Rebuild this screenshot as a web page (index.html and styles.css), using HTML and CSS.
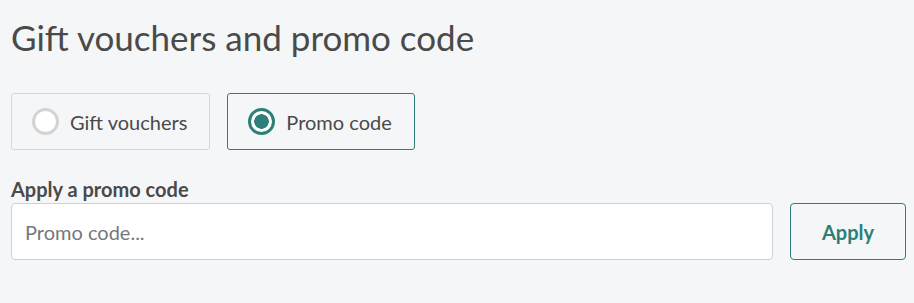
FILE: index.html
```html
<!DOCTYPE html>
<html>
  <head>
    <title>Gift vouchers and promo code</title>
    <link rel="stylesheet" href="styles.css">
  </head>
  <body>
    <h1>Gift vouchers and promo code</h1>
    <div class="options">
      <label class="option">
        <span class="radio"></span>
        Gift vouchers
      </label>
      <label class="option selected">
        <span class="radio"></span>
        Promo code
      </label>
    </div>
    <div class="field-label">Apply a promo code</div>
    <div class="promo-row">
      <input class="promo-input" type="text" placeholder="Promo code...">
      <button class="apply-button">Apply</button>
    </div>
  </body>
</html>
```

FILE: styles.css
```css
body {
  margin: 0;
  padding: 0 8px 0 11px;
  background-color: #f5f6f8;
  color: #4a4a4a;
  font-family: Lato, "Open Sans", sans-serif;
}

h1 {
  margin: 0;
  padding-top: 16px;
  font-size: 35px;
  font-weight: 400;
  line-height: 43px;
}

.options {
  display: flex;
  gap: 17px;
  margin-top: 34px;
}

.option {
  display: flex;
  align-items: center;
  gap: 11px;
  box-sizing: border-box;
  height: 57px;
  padding: 0 22px 0 20px;
  border: 1px solid #d5d6d8;
  border-radius: 3px;
  font-size: 20px;
  cursor: pointer;
}

.option.selected {
  border-color: #2c7f79;
}

.radio {
  box-sizing: border-box;
  width: 27px;
  height: 27px;
  border: 3px solid #d3d3d3;
  border-radius: 50%;
  background-color: #fff;
}

.option.selected .radio {
  border-color: #2c8079;
  background: radial-gradient(circle, #2c8079 0 7px, #fff 7.5px);
}

.field-label {
  margin-top: 28px;
  font-size: 20px;
  font-weight: 700;
  line-height: 23px;
}

.promo-row {
  display: flex;
  gap: 17px;
  margin-top: 2px;
}

.promo-input {
  flex: 1;
  box-sizing: border-box;
  height: 57px;
  padding: 0 13px;
  border: 1px solid #cfd0d2;
  border-radius: 4px;
  background-color: #fff;
  color: #4a4a4a;
  font-family: inherit;
  font-size: 20px;
  outline: none;
}

.promo-input::placeholder {
  color: #76777a;
}

.apply-button {
  box-sizing: border-box;
  width: 116px;
  height: 57px;
  border: 1px solid #2c7f79;
  border-radius: 4px;
  background-color: #f5f6f8;
  color: #2c7f79;
  font-family: inherit;
  font-size: 20px;
  font-weight: 700;
  cursor: pointer;
}
```
